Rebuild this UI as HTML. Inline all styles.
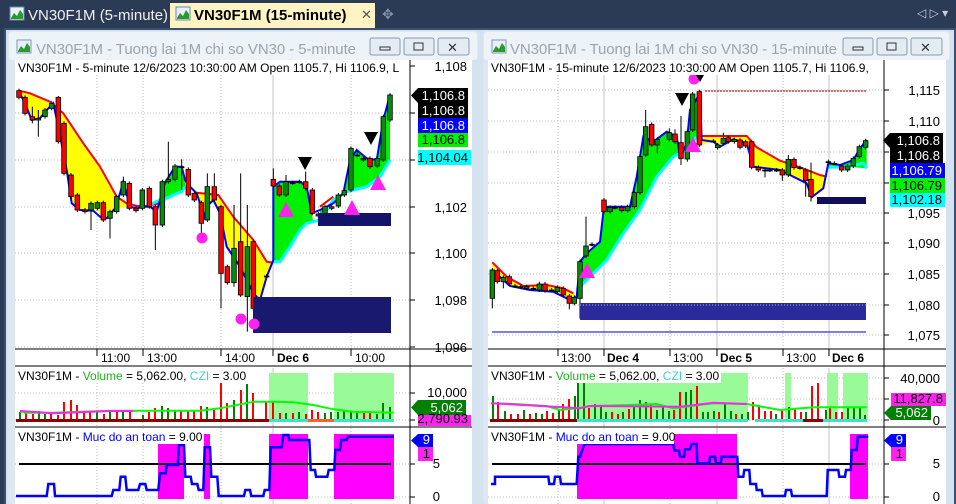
<!DOCTYPE html>
<html><head><meta charset="utf-8"><style>
html,body{margin:0;padding:0;width:956px;height:504px;overflow:hidden;background:#2b3a55;}
svg{display:block;font-family:"Liberation Sans",sans-serif;}
</style></head><body>
<svg id="s" width="956" height="504" viewBox="0 0 956 504" xmlns="http://www.w3.org/2000/svg">
<rect x="0" y="0" width="956" height="28" fill="#2b3a55"/>
<rect x="10" y="7" width="14" height="13" fill="#e8f0f8" stroke="#6a8ab0"/>
<path d="M11 18 L14 13 L17 16 L20 10 L23 14 L23 19 L11 19Z" fill="#2a9a2a"/>
<text x="28" y="20" font-size="15" fill="#f0f0f0">VN30F1M (5-minute)</text>
<rect x="170" y="3" width="205" height="25" fill="#fdf3c3"/>
<rect x="176" y="7" width="14" height="13" fill="#e8f0f8" stroke="#6a8ab0"/>
<path d="M177 18 L180 13 L183 16 L186 10 L189 14 L189 19 L177 19Z" fill="#2a9a2a"/>
<text x="194" y="20" font-size="15" font-weight="bold" fill="#000">VN30F1M (15-minute)</text>
<text x="361" y="19" font-size="13" fill="#555">✕</text>
<text x="382" y="19" font-size="14" fill="#8090a8">✥</text>
<text x="917" y="17" font-size="12" fill="#ccd">◁ ▷ ▾</text>
<rect x="4" y="28" width="952" height="476" fill="#3c4f70"/>
<rect x="6" y="30" width="948" height="474" fill="#d5e2f0"/>
<rect x="8" y="31" width="470" height="473" fill="#dde7f2" rx="4"/>
<rect x="9" y="32" width="468" height="28" fill="#eef3f8" rx="3"/>
<rect x="17" y="40" width="14" height="13" fill="#e8f0f8" stroke="#7a9ac0"/>
<path d="M18 51 L21 46 L24 49 L27 43 L30 47 L30 52 L18 52Z" fill="#2a9a2a"/>
<text x="36" y="54" font-size="15" fill="#9aa5b0" textLength="320">VN30F1M - Tuong lai 1M chi so VN30 - 5-minute</text>
<g fill="#e4ebf3" stroke="#8a9bb0"><rect x="370" y="38" width="30" height="17" rx="2"/><rect x="404" y="38" width="30" height="17" rx="2"/><rect x="438" y="38" width="31" height="17" rx="2"/></g>
<rect x="380" y="47" width="10" height="3" fill="none" stroke="#333"/>
<rect x="414" y="43" width="9" height="7" fill="none" stroke="#333"/>
<text x="447" y="52" font-size="13" fill="#333">✕</text>
<rect x="15" y="60" width="457" height="444" fill="#fff"/>
<rect x="483" y="31" width="467" height="473" fill="#dde7f2" rx="4"/>
<rect x="484" y="32" width="465" height="28" fill="#eef3f8" rx="3"/>
<rect x="492" y="40" width="14" height="13" fill="#e8f0f8" stroke="#7a9ac0"/>
<path d="M493 51 L496 46 L499 49 L502 43 L505 47 L505 52 L493 52Z" fill="#2a9a2a"/>
<text x="510" y="54" font-size="15" fill="#9aa5b0" textLength="327">VN30F1M - Tuong lai 1M chi so VN30 - 15-minute</text>
<g fill="#e4ebf3" stroke="#8a9bb0"><rect x="843" y="38" width="30" height="17" rx="2"/><rect x="877" y="38" width="30" height="17" rx="2"/><rect x="911" y="38" width="31" height="17" rx="2"/></g>
<rect x="853" y="47" width="10" height="3" fill="none" stroke="#333"/>
<rect x="887" y="43" width="9" height="7" fill="none" stroke="#333"/>
<text x="920" y="52" font-size="13" fill="#333">✕</text>
<rect x="488" y="60" width="458" height="444" fill="#fff"/>
<g id="L"></g><g id="R"></g>
</svg>
<script>
var NS="http://www.w3.org/2000/svg";
function el(p,t,a,txt){var e=document.createElementNS(NS,t);for(var k in a)e.setAttribute(k,a[k]);if(txt!==undefined)e.textContent=txt;p.appendChild(e);return e;}
function pts(arr,ox,oy){var s=[];for(var i=0;i<arr.length;i+=2)s.push((arr[i]/3+ox).toFixed(1)+","+(arr[i+1]/3+oy).toFixed(1));return s.join(" ");}
function poly(g,top,bot,ox,oy,fill){el(g,"polygon",{points:pts(top.concat(bot),ox,oy),fill:fill});}
function line(g,a,ox,oy,c,w){el(g,"polyline",{points:pts(a,ox,oy),fill:"none",stroke:c,"stroke-width":w});}
function candles(g,d,ox,oy){for(var i=0;i<d.length;i++){var c=d[i],x=c[0]/3+ox,o=c[1]/3+oy,cl=c[2]/3+oy;var top=Math.min(o,cl),bot=Math.max(o,cl);var hi=c[3]!=null?c[3]/3+oy:top-2,lo=c[4]!=null?c[4]/3+oy:bot+2;el(g,"line",{x1:x,x2:x,y1:hi,y2:lo,stroke:"#000","stroke-width":1});var h=Math.max(bot-top,1);el(g,"rect",{x:x-2.3,y:top,width:4.6,height:h,fill:cl>o?"#f00":(cl<o?"#0a8a0a":"#000"),stroke:"#000","stroke-width":0.8});}}
function grid(g,x1,x2,ys,xs,y1,y2,solid){ys.forEach(function(y){el(g,"line",{x1:x1,x2:x2,y1:y,y2:y,stroke:"#bbb","stroke-dasharray":"1,2"});});xs.forEach(function(x){el(g,"line",{x1:x,x2:x,y1:y1,y2:y2,stroke:"#bbb","stroke-dasharray":"1,2"});});solid.forEach(function(x){el(g,"line",{x1:x,x2:x,y1:y1,y2:y2,stroke:"#c4c4c4"});});}
function tag(g,x,y,w,h,bg,fg,t,arrow){if(arrow)el(g,"polygon",{points:(x-7)+","+(y+h/2)+" "+x+","+y+" "+x+","+(y+h),fill:bg});el(g,"rect",{x:x,y:y,width:w,height:h,fill:bg});el(g,"text",{x:x+w-3,y:y+h-3,"font-size":13,fill:fg,"text-anchor":"end"},t);}
function txt(g,x,y,t,s,a,c){el(g,"text",{x:x,y:y,"font-size":s||12,fill:c||"#000","text-anchor":a||"start"},t);}

var L=document.getElementById("L");
grid(L,15,410,[66,113,160,207,253,300,347],[97,143,221,351],60,349,[273]);
grid(L,15,410,[393,420],[97,143,221,351],368,427,[273]);
grid(L,15,410,[464,497],[97,143,221,351],428,504,[273]);
var ox=0,oy=60;
poly(L,[57,92,90,100,150,125,190,160,250,250,300,320,350,410,380,430],[380,440,350,445,330,475,310,478,290,448,240,452,215,430,200,330,180,215,175,200,160,130,140,150,120,175,95,180,75,130,57,95],ox,oy,"#ffff00");
poly(L,[480,400,500,360,525,320,545,320,555,360],[555,380,545,395,520,405,490,420,480,420],ox,oy,"#00f000");
poly(L,[590,398,655,405,700,470,760,540,800,605,820,608],[820,605,800,650,780,720,760,700,720,620,680,560,660,460,640,420,620,440,610,480,600,430],ox,oy,"#ffff00");
poly(L,[820,380,840,365,900,365,920,380,935,460],[940,485,920,490,900,510,870,560,840,605,820,605],ox,oy,"#00f000");
poly(L,[960,450,1000,430,1030,400,1050,300,1070,270,1100,295,1130,300,1150,180,1170,105],[1170,300,1140,350,1100,380,1040,395,1000,420,960,480],ox,oy,"#00f000");
line(L,[57,92,90,100,150,125,190,160,250,250,300,320,350,410,380,430,410,438,440,438,480,430],ox,oy,"#f00",2);
line(L,[590,398,655,405,700,470,760,540,800,605,820,608],ox,oy,"#f00",2);
line(L,[960,440,1000,410],ox,oy,"#f00",2);
line(L,[820,605,840,605,870,560,900,510,920,490,940,485,960,480,1000,420,1040,395,1100,380,1140,350,1170,300],ox,oy,"#00ffff",3);
line(L,[440,438,480,420,490,420,520,405,545,395,555,380],ox,oy,"#00ffff",3);
line(L,[57,95,75,130,95,180,120,175,140,150,160,130,175,200,200,330,215,430,240,450,280,452,300,470,320,475,345,445,360,400,370,365,390,440,410,445,430,440,450,440,470,455,480,420,490,380,500,360,525,320,545,320,555,360,565,375,590,400,600,430,610,480,620,440,640,420,660,460,680,560,720,620,760,700,780,720,800,650,820,600,820,380,840,365,900,365,920,380,935,460,960,450,1000,430,1030,400,1050,300,1070,270,1100,295,1130,300,1150,180,1170,105],ox,oy,"#0000ff",2);
candles(L,[[57,92,112],[75,112,160],[97,170,180,140,190],[115,180,175,150,230],[135,170,150],[155,145,130],[175,112,245,108],[192,190,340],[213,345,410],[232,405,450],[255,450,455],[273,450,430,null,510],[292,445,428],[310,428,480],[330,475,455,null,535],[350,455,410],[370,405,365,350],[388,370,445],[408,445,452],[427,445,390],[448,385,440],[466,440,495,null,570],[487,495,365],[505,365,358,245],[525,358,318],[545,320,320,298,390],[565,328,405],[583,400,420],[604,428,490,null,520],[622,480,380,340],[643,380,420,340],[663,440,640,null,745],[682,620,668],[702,668,565,435,680],[722,545,705,340],[742,710,560,435,815],[760,545,745],[800,648,648],[820,358,378,325],[838,378,405],[858,405,365,345],[878,368,368],[898,365,365],[917,365,385,335],[937,390,460],[955,462,468],[975,468,440],[995,440,445],[1015,438,405],[1033,405,392],[1053,390,265],[1072,285,285,270],[1090,295,300],[1110,295,320],[1132,318,295],[1150,300,170],[1170,180,105]],ox,oy);
el(L,"rect",{x:318,y:213,width:73,height:13,fill:"#13136a"});
el(L,"rect",{x:253,y:297,width:138,height:36,fill:"#191970"});
[[202,238],[241,319],[254,324]].forEach(function(p){el(L,"circle",{cx:p[0],cy:p[1],r:5.5,fill:"#ff22ee"});});
[[286,202],[352,200],[378,175]].forEach(function(p){el(L,"polygon",{points:p[0]+","+p[1]+" "+(p[0]+8)+","+(p[1]+15)+" "+(p[0]-8)+","+(p[1]+15),fill:"#ff22ee"});});
[[305,157],[371,132]].forEach(function(p){el(L,"polygon",{points:(p[0]-7)+","+p[1]+" "+(p[0]+7)+","+p[1]+" "+p[0]+","+(p[1]+13),fill:"#000"});});
el(L,"rect",{x:15,y:60,width:395,height:15,fill:"#fff"});
txt(L,18,72,"VN30F1M - 5-minute 12/6/2023 10:30:00 AM Open 1105.7, Hi 1106.9, L",12);
el(L,"line",{x1:410,x2:410,y1:60,y2:504,stroke:"#000"});
el(L,"line",{x1:15,x2:472,y1:349,y2:349,stroke:"#000"});
el(L,"line",{x1:15,x2:472,y1:366,y2:366,stroke:"#000"});
el(L,"line",{x1:15,x2:472,y1:427,y2:427,stroke:"#000"});
[[97,"11:00"],[143,"13:00"],[221,"14:00"],[351,"10:00"]].forEach(function(t){el(L,"line",{x1:t[0],x2:t[0],y1:349,y2:356,stroke:"#000"});txt(L,t[0]+4,362,t[1],12);});
el(L,"line",{x1:273,x2:273,y1:349,y2:356,stroke:"#000"});el(L,"text",{x:277,y:362,"font-size":12,"font-weight":"bold"},"Dec 6");
[[66,"1,108"],[207,"1,102"],[253,"1,100"],[300,"1,098"],[347,"1,096"]].forEach(function(t){el(L,"line",{x1:410,x2:415,y1:t[0],y2:t[0],stroke:"#000"});txt(L,467,t[0]+5,t[1],13,"end");});
[113,160].forEach(function(y){el(L,"line",{x1:410,x2:415,y1:y,y2:y,stroke:"#000"});});
tag(L,418,88,50,15,"#000","#fff","1,106.8",true);tag(L,418,103,50,15,"#000","#fff","1,106.8");tag(L,418,118,50,15,"#0000ff","#fff","1,106.8");tag(L,418,133,50,14,"#00f000","#000","1,106.8");tag(L,418,150,53,15,"#00ffff","#000","1,104.04");
el(L,"rect",{x:269,y:373,width:39,height:47,fill:"#98fb98"});el(L,"rect",{x:334,y:373,width:60,height:47,fill:"#98fb98"});
var vl=[[20,8,"g"],[26,8,"r"],[33,6,"r"],[39,9,"g"],[45,6,"g"],[51,6,"r"],[58,5,"r"],[64,18,"r"],[71,20,"r"],[77,15,"r"],[84,8,"r"],[90,8,"r"],[97,8,"g"],[104,6,"r"],[110,8,"g"],[117,9,"r"],[123,8,"g"],[130,8,"r"],[143,5,"g"],[149,8,"r"],[155,12,"r"],[162,14,"g"],[168,12,"g"],[175,10,"g"],[181,9,"r"],[188,9,"r"],[194,9,"r"],[201,14,"r"],[207,13,"g"],[214,12,"r"],[221,37,"r"],[227,17,"r"],[234,20,"g"],[241,30,"r"],[247,36,"g"],[253,27,"r"],[266,19,"r"],[273,18,"r"],[280,7,"r"],[286,7,"g"],[293,7,"r"],[299,8,"g"],[306,6,"r"],[312,10,"r"],[318,8,"r"],[325,7,"g"],[331,8,"g"],[338,8,"g"],[344,9,"g"],[351,8,"g"],[357,8,"g"],[364,7,"r"],[370,8,"r"],[377,6,"g"],[383,17,"g"],[390,13,"g"]];
vl.forEach(function(v){el(L,"line",{x1:v[0],x2:v[0],y1:420,y2:420-v[1],stroke:v[2]=="r"?"#f00":"#008000","stroke-width":2});});
el(L,"rect",{x:16,y:419,width:253,height:3,fill:"#8b0000"});el(L,"rect",{x:269,y:419,width:125,height:3,fill:"#40e0d0"});
el(L,"rect",{x:308,y:419,width:26,height:3,fill:"#ff6030"});
line(L,[60,215,75,215,75,218,160,218,330,212,600,212,660,205,760,185,820,185,880,187,940,195,1000,208,1060,215,1180,218],0,340,"#00ff00",2);
line(L,[60,213,160,220,330,213,400,213],0,340,"#ff22ee",2);
el(L,"rect",{x:15,y:368,width:233,height:15,fill:"#fff"});
el(L,"text",{x:18,y:380,"font-size":12},"").innerHTML='VN30F1M - <tspan fill="#20b020">Volume</tspan> = 5,062.00, <tspan fill="#40d0d0">CZI</tspan> = 3.00';
txt(L,467,397,"10,000",13,"end");el(L,"line",{x1:410,x2:415,y1:393,y2:393,stroke:"#000"});el(L,"line",{x1:410,x2:415,y1:420,y2:420,stroke:"#000"});
tag(L,418,400,48,15,"#008000","#fff","5,062",true);tag(L,418,415,53,11,"#ff22ee","#000","2,790.93");
[[158,444,26],[204,434,6],[269,434,39],[334,434,60]].forEach(function(r){el(L,"rect",{x:r[0],y:r[1],width:r[2],height:499-r[1],fill:"#ff00ff"});});
el(L,"line",{x1:19,x2:391,y1:464,y2:464,stroke:"#000","stroke-width":2});
line(L,[48,468,140,468,145,432,162,432,165,468,335,468,340,450,358,450,362,410,376,410,380,450,415,450,420,432,436,432,440,450,475,450,480,400,497,400,500,375,533,375,537,315,552,315,556,410,572,410,576,432,592,432,596,450,610,450,614,322,630,322,634,410,652,410,656,468,732,468,736,450,750,450,754,468,790,468,794,450,808,450,812,322,845,322,850,285,865,285,868,300,928,300,932,390,945,390,948,410,982,410,986,390,1003,390,1006,330,1020,330,1024,300,1040,300,1044,290,1182,290],0,340,"#0000ff",2.5);
el(L,"rect",{x:15,y:429,width:186,height:15,fill:"#fff"});
el(L,"text",{x:18,y:441,"font-size":12},"").innerHTML='VN30F1M - <tspan fill="#0000ff">Muc do an toan</tspan> = 9.00';
tag(L,418,434,15,13,"#0000ff","#fff","9",true);tag(L,418,447,15,14,"#ff22ee","#000","1");
txt(L,440,468,"5",13,"end");txt(L,440,501,"0",13,"end");
el(L,"line",{x1:410,x2:415,y1:464,y2:464,stroke:"#000"});el(L,"line",{x1:410,x2:415,y1:497,y2:497,stroke:"#000"});
el(L,"rect",{x:472,y:60,width:6,height:444,fill:"#d5e2f0"});

var R=document.getElementById("R");
var rys=[90,121,152,183,213,243,274,305,335];
grid(R,488,884,rys,[558,670,783],60,349,[604,717,829]);
grid(R,488,884,[378,399,420],[558,670,783],368,427,[604,717,829]);
grid(R,488,884,[464,497],[558,670,783],428,504,[604,717,829]);
ox=480;oy=60;
poly(R,[37,607,80,650,130,678,200,675,250,685,280,700],[290,710,270,720,220,695,150,690,90,678,37,630],ox,oy,"#ffff00");
poly(R,[290,700,300,605,320,580,360,545,372,440,450,440,470,350,490,230,520,245,560,215,590,230,600,290,620,250,630,150,660,100,665,240],[650,230,610,275,580,290,530,350,480,450,430,520,380,600,330,650,290,690],ox,oy,"#00f000");
poly(R,[660,228,800,228,830,262,900,302,960,322,1020,345,1040,350],[1045,335,1030,385,995,412,980,370,930,345,900,330,820,320,800,250,760,238,720,260,700,245,660,255],ox,oy,"#ffff00");
poly(R,[1045,305,1080,315,1120,300,1140,265,1160,240],[1160,325,1100,320,1045,322],ox,oy,"#00f000");
line(R,[37,607,80,650,130,678,200,675,250,685,280,700],ox,oy,"#f00",2);
line(R,[660,228,800,228,830,262,900,302,960,322,1020,345,1040,350],ox,oy,"#f00",2);
line(R,[290,690,330,650,380,600,430,520,480,450,530,350,580,290,610,275,650,230,660,228],ox,oy,"#00ffff",3);
line(R,[1045,322,1100,320,1150,310,1160,325],ox,oy,"#00ffff",3);
line(R,[37,630,90,678,150,690,220,695,270,720,290,710,300,605,320,580,360,545,372,440,450,440,470,350,490,230,520,245,560,215,590,230,600,290,620,250,630,150,660,100,665,240,700,245,720,260,760,238,800,250,820,320,900,330,930,345,980,370,995,412,1030,385,1045,310,1080,315,1120,300,1140,265,1160,240],ox,oy,"#0000ff",2);
candles(R,[[37,715,630,null,745],[52,632,665],[70,665,652,null,685],[88,650,672],[105,678,678],[122,680,680],[140,685,680],[160,685,685],[178,690,672,665],[195,672,692],[215,690,690],[232,695,682],[250,685,705],[268,708,730,null,748],[283,730,712],[300,715,605,null,775],[318,588,558,470],[336,553,553],[372,420,455],[390,455,442],[405,442,442],[425,442,452],[443,452,440],[463,440,398],[480,398,290],[497,285,200,150],[515,193,255],[532,255,238,null,280],[568,238,218,205],[585,222,245,208],[603,248,295,168,315],[622,297,215,null,305],[638,210,102],[658,95,255],[700,243,243],[713,263,255],[730,250,235,218],[745,233,245],[763,245,238],[780,240,262],[797,245,258],[815,245,322],[835,322,330],[855,330,330,null,352],[870,330,330],[890,330,330],[907,330,345,null,362],[925,345,298,285],[942,298,323],[960,323,323],[977,330,362,null,410],[993,358,410,308,425],[1045,305,305],[1063,310,310],[1085,318,330],[1103,330,318],[1120,318,295],[1138,290,260],[1157,262,242]],ox,oy);
el(R,"line",{x1:705,x2:866,y1:91,y2:91,stroke:"#c84040","stroke-width":1.5,"stroke-dasharray":"2,1"});
el(R,"line",{x1:492,x2:866,y1:332,y2:332,stroke:"#3030d0","stroke-width":1.2});
el(R,"rect",{x:580,y:303,width:286,height:17,fill:"#2a2a9a"});
el(R,"line",{x1:580,x2:866,y1:305,y2:305,stroke:"#bbb","stroke-dasharray":"1,2"});
el(R,"rect",{x:817,y:197,width:49,height:7,fill:"#0e0e5a"});
el(R,"circle",{cx:694,cy:79,r:5.5,fill:"#ff22ee"});
[[587,263],[693,137]].forEach(function(p){el(R,"polygon",{points:p[0]+","+p[1]+" "+(p[0]+8)+","+(p[1]+15)+" "+(p[0]-8)+","+(p[1]+15),fill:"#ff22ee"});});
el(R,"polygon",{points:"675,93 689,93 682,106",fill:"#000"});
el(R,"rect",{x:488,y:60,width:396,height:15,fill:"#fff"});
txt(R,491,72,"VN30F1M - 15-minute 12/6/2023 10:30:00 AM Open 1105.7, Hi 1106.9, ",12);
el(R,"polygon",{points:"696,75 704,75 700,82",fill:"#000"});
el(R,"line",{x1:884,x2:884,y1:60,y2:504,stroke:"#000"});
el(R,"line",{x1:488,x2:946,y1:349,y2:349,stroke:"#000"});
el(R,"line",{x1:488,x2:946,y1:366,y2:366,stroke:"#000"});
el(R,"line",{x1:488,x2:946,y1:427,y2:427,stroke:"#000"});
[[558,"13:00"],[670,"13:00"],[783,"13:00"]].forEach(function(t){el(R,"line",{x1:t[0],x2:t[0],y1:349,y2:356,stroke:"#000"});txt(R,t[0]+3,362,t[1],12);});
[[604,"Dec 4"],[717,"Dec 5"],[829,"Dec 6"]].forEach(function(t){el(R,"line",{x1:t[0],x2:t[0],y1:349,y2:356,stroke:"#000"});el(R,"text",{x:t[0]+3,y:362,"font-size":12,"font-weight":"bold"},t[1]);});
var rl=["1,115","1,110",null,"1,100","1,095","1,090","1,085","1,080","1,075"];
rys.forEach(function(y,i){el(R,"line",{x1:884,x2:889,y1:y,y2:y,stroke:"#000"});if(rl[i])txt(R,940,y+5,rl[i],13,"end");});
tag(R,890,133,53,15,"#000","#fff","1,106.8",true);tag(R,890,148,53,15,"#000","#fff","1,106.8");tag(R,890,163,55,15,"#0000ff","#fff","1,106.79");tag(R,890,178,55,15,"#00f000","#000","1,106.79");tag(R,890,193,55,14,"#00ffff","#000","1,102.18");
[[577,171],[785,6],[827,11],[843,25]].forEach(function(r){el(R,"rect",{x:r[0],y:373,width:r[1],height:47,fill:"#98fb98"});});
var vr=[[493,24,"g"],[498,18,"r"],[505,9,"g"],[511,6,"r"],[518,6,"r"],[524,10,"g"],[530,6,"r"],[536,7,"g"],[542,6,"g"],[547,9,"r"],[553,7,"r"],[559,10,"g"],[563,16,"r"],[569,21,"r"],[575,24,"g"],[578,37,"g"],[584,37,"g"],[589,12,"r"],[595,16,"g"],[601,14,"g"],[606,8,"g"],[612,8,"r"],[618,6,"r"],[623,8,"g"],[629,11,"r"],[634,15,"g"],[640,20,"g"],[646,18,"g"],[651,15,"r"],[657,10,"g"],[663,15,"g"],[669,9,"g"],[674,10,"r"],[680,28,"r"],[686,28,"g"],[691,30,"g"],[697,34,"r"],[703,8,"g"],[708,8,"g"],[714,9,"g"],[719,8,"r"],[725,17,"g"],[731,9,"g"],[736,6,"r"],[742,6,"g"],[748,8,"g"],[753,18,"r"],[759,15,"r"],[765,9,"r"],[771,9,"r"],[776,6,"g"],[782,9,"r"],[789,13,"g"],[795,11,"r"],[801,8,"r"],[806,8,"g"],[812,34,"r"],[818,37,"r"],[826,10,"g"],[830,13,"r"],[836,8,"r"],[842,8,"r"],[848,12,"g"],[854,12,"g"],[860,12,"g"],[865,5,"g"]];
vr.forEach(function(v){el(R,"line",{x1:v[0],x2:v[0],y1:420,y2:420-v[1],stroke:v[2]=="r"?"#f00":"#008000","stroke-width":2});});
el(R,"rect",{x:490,y:419,width:87,height:3,fill:"#8b0000"});el(R,"rect",{x:577,y:419,width:171,height:3,fill:"#40e0d0"});el(R,"rect",{x:755,y:419,width:112,height:3,fill:"#40e0d0"});el(R,"rect",{x:803,y:419,width:20,height:3,fill:"#8b0000"});
line(R,[33,220,100,222,200,228,240,240,290,235,330,228,450,225,530,222,580,235,700,220,800,222,900,240,1000,232,1160,232],480,330,"#00ff00",2);
line(R,[33,220,80,222,300,235,330,228,600,230,700,218,800,222],480,330,"#ff22ee",2);
el(R,"rect",{x:488,y:368,width:233,height:15,fill:"#fff"});
el(R,"text",{x:491,y:380,"font-size":12},"").innerHTML='VN30F1M - <tspan fill="#20b020">Volume</tspan> = 5,062.00, <tspan fill="#40d0d0">CZI</tspan> = 3.00';
txt(R,940,383,"40,000",13,"end");txt(R,940,425,"0",13,"end");
[378,399,420].forEach(function(y){el(R,"line",{x1:884,x2:889,y1:y,y2:y,stroke:"#000"});});
tag(R,891,393,55,13,"#ff22ee","#000","11,827.8");tag(R,891,406,40,14,"#008000","#fff","5,062",true);
el(R,"rect",{x:577,y:434,width:160,height:65,fill:"#ff00ff"});el(R,"rect",{x:850,y:434,width:18,height:65,fill:"#ff00ff"});
el(R,"line",{x1:492,x2:866,y1:464,y2:464,stroke:"#000","stroke-width":2});
line(R,[33,462,45,462,45,440,205,440,208,462,222,462,225,440,240,440,243,462,290,462,295,380,300,380,313,342,580,342,583,362,597,362,600,380,612,380,615,358,630,358,635,342,650,342,652,400,688,400,690,380,705,380,708,400,722,400,725,380,772,380,775,440,790,440,793,420,808,420,811,462,828,462,830,480,845,480,848,498,915,498,918,480,933,480,936,498,1040,498,1043,420,1075,420,1078,440,1095,440,1098,420,1112,420,1115,360,1130,360,1133,320,1165,320],480,330,"#0000ff",2.5);
el(R,"rect",{x:488,y:429,width:186,height:15,fill:"#fff"});
el(R,"text",{x:491,y:441,"font-size":12},"").innerHTML='VN30F1M - <tspan fill="#0000ff">Muc do an toan</tspan> = 9.00';
tag(R,891,434,15,13,"#0000ff","#fff","9",true);tag(R,891,447,15,14,"#ff22ee","#000","1");
txt(R,940,468,"5",13,"end");txt(R,940,501,"0",13,"end");
[464,497].forEach(function(y){el(R,"line",{x1:884,x2:889,y1:y,y2:y,stroke:"#000"});});
el(R,"rect",{x:946,y:60,width:4,height:444,fill:"#d5e2f0"});
</script>
</body></html>
